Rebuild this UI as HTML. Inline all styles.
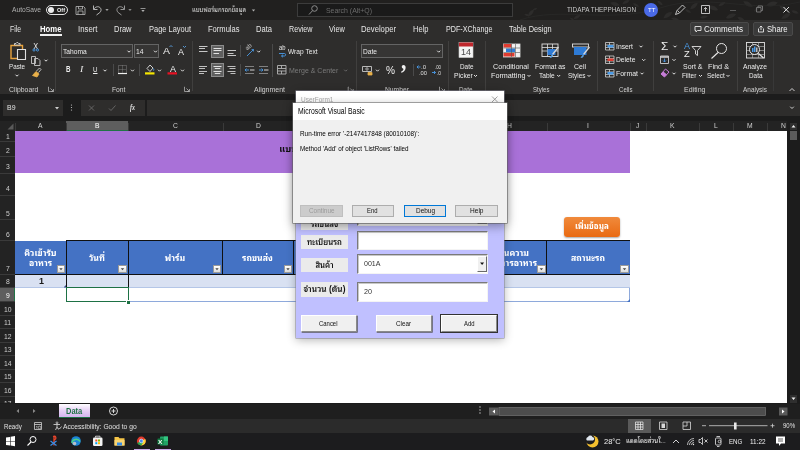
<!DOCTYPE html>
<html lang="th">
<head>
<meta charset="utf-8">
<title>Excel</title>
<style>
*{box-sizing:border-box;margin:0;padding:0}
html,body{width:800px;height:450px;overflow:hidden;background:#1c1c1c}
body{position:relative;font-family:"Liberation Sans","Noto Sans Thai Looped","Loma","Noto Sans Thai",sans-serif;font-size:8px;color:#e4e4e4;line-height:1}
.a{position:absolute}
.t{position:absolute;white-space:nowrap;line-height:10px;height:10px}
svg{overflow:visible}
</style>
</head>
<body>
<div id="root" style="position:absolute;left:0;top:0;width:800px;height:450px;overflow:hidden;will-change:transform;">
<div class="a" style="left:0px;top:0px;width:800px;height:20px;background:#21201f;"></div>
<div class="t" style="left:12.0px;top:5.0px;font-size:7.70px;color:#b0b0b0;transform-origin:0 50%;transform:scaleX(0.869);">AutoSave</div>
<div class="a" style="left:46px;top:5px;width:22px;height:10px;border:1px solid #e4e4e4;border-radius:5px;"></div>
<div class="a" style="left:48px;top:7px;width:6px;height:6px;background:#ececec;border-radius:3px;"></div>
<div class="t" style="left:57.0px;top:5.0px;font-size:6.20px;color:#f0f0f0;transform-origin:0 50%;transform:scaleX(0.894);font-weight:bold;">Off</div>
<svg class="a" style="left:0px;top:0px" width="800" height="20" viewBox="0 0 800 20" fill="none" stroke="#d0d0d0" stroke-width="1"><path transform="translate(531 13) rotate(-50)" d="M-4.5 0Q0 -3.42 4.5 0Q0 3.42 -4.5 0z" fill="#2d2c2b" stroke="none"/><path transform="translate(527 15) rotate(20)" d="M-3.0 0Q0 -2.2800000000000002 3.0 0Q0 2.2800000000000002 -3.0 0z" fill="#2d2c2b" stroke="none"/><path transform="translate(535 9) rotate(-20)" d="M-2.5 0Q0 -1.9 2.5 0Q0 1.9 -2.5 0z" fill="#2d2c2b" stroke="none"/><path transform="translate(577 17) rotate(-30)" d="M-4.0 0Q0 -3.04 4.0 0Q0 3.04 -4.0 0z" fill="#2d2c2b" stroke="none"/><path transform="translate(572 19) rotate(30)" d="M-2.5 0Q0 -1.9 2.5 0Q0 1.9 -2.5 0z" fill="#2d2c2b" stroke="none"/><path transform="translate(615 4) rotate(15)" d="M-5.0 0Q0 -3.8 5.0 0Q0 3.8 -5.0 0z" fill="#2d2c2b" stroke="none"/><path transform="translate(626 2) rotate(-25)" d="M-4.0 0Q0 -3.04 4.0 0Q0 3.04 -4.0 0z" fill="#2d2c2b" stroke="none"/><path transform="translate(636 5) rotate(30)" d="M-3.5 0Q0 -2.66 3.5 0Q0 2.66 -3.5 0z" fill="#2d2c2b" stroke="none"/><path transform="translate(668 15) rotate(-35)" d="M-5.5 0Q0 -4.18 5.5 0Q0 4.18 -5.5 0z" fill="#2d2c2b" stroke="none"/><path transform="translate(675 19) rotate(10)" d="M-4.0 0Q0 -3.04 4.0 0Q0 3.04 -4.0 0z" fill="#2d2c2b" stroke="none"/><path transform="translate(694 6) rotate(-40)" d="M-5.0 0Q0 -3.8 5.0 0Q0 3.8 -5.0 0z" fill="#2d2c2b" stroke="none"/><path transform="translate(688 11) rotate(30)" d="M-3.5 0Q0 -2.66 3.5 0Q0 2.66 -3.5 0z" fill="#2d2c2b" stroke="none"/><path transform="translate(713 8) rotate(20)" d="M-5.5 0Q0 -4.18 5.5 0Q0 4.18 -5.5 0z" fill="#2d2c2b" stroke="none"/><path transform="translate(722 4) rotate(-30)" d="M-4.0 0Q0 -3.04 4.0 0Q0 3.04 -4.0 0z" fill="#2d2c2b" stroke="none"/><path transform="translate(731 16) rotate(-20)" d="M-5.5 0Q0 -4.18 5.5 0Q0 4.18 -5.5 0z" fill="#2d2c2b" stroke="none"/><path transform="translate(741 19) rotate(25)" d="M-4.0 0Q0 -3.04 4.0 0Q0 3.04 -4.0 0z" fill="#2d2c2b" stroke="none"/><path transform="translate(748 4) rotate(30)" d="M-5.5 0Q0 -4.18 5.5 0Q0 4.18 -5.5 0z" fill="#2d2c2b" stroke="none"/><path transform="translate(757 9) rotate(-40)" d="M-4.0 0Q0 -3.04 4.0 0Q0 3.04 -4.0 0z" fill="#2d2c2b" stroke="none"/><path transform="translate(772 4) rotate(-15)" d="M-6.0 0Q0 -4.5600000000000005 6.0 0Q0 4.5600000000000005 -6.0 0z" fill="#2d2c2b" stroke="none"/><path transform="translate(783 8) rotate(35)" d="M-4.5 0Q0 -3.42 4.5 0Q0 3.42 -4.5 0z" fill="#2d2c2b" stroke="none"/><path transform="translate(786 16) rotate(-30)" d="M-5.5 0Q0 -4.18 5.5 0Q0 4.18 -5.5 0z" fill="#2d2c2b" stroke="none"/><path transform="translate(795 12) rotate(20)" d="M-4.0 0Q0 -3.04 4.0 0Q0 3.04 -4.0 0z" fill="#2d2c2b" stroke="none"/><path transform="translate(660 3) rotate(40)" d="M-3.5 0Q0 -2.66 3.5 0Q0 2.66 -3.5 0z" fill="#2d2c2b" stroke="none"/><path transform="translate(704 17) rotate(-10)" d="M-4.0 0Q0 -3.04 4.0 0Q0 3.04 -4.0 0z" fill="#2d2c2b" stroke="none"/><path d="M520 20c40-14 90 4 140-12s90 6 140-6" stroke="#2a2928" stroke-width="0.800" fill="none"/></svg>
<div class="a" style="left:297px;top:3px;width:216px;height:14px;background:#1a1a1a;border:1px solid #3c3c3c;"></div>
<svg class="a" style="left:0px;top:0px" width="800" height="20" viewBox="0 0 800 20" fill="none" stroke="#d0d0d0" stroke-width="1"><path d="M76 6.500h7.500l1.500 1.500v6.500h-9z M78.500 6.500v2.500h4v-2.500 M78 14.500v-3.500h5v3.500" stroke="#b8b8b8" stroke-width="0.800"/><path d="M93.500 5.500v4h4 M93.800 9.200c1.500-2.400 4.200-3.200 6-1.800 2 1.600 1.500 4.200-0.800 5.800l-2.500 1.800" stroke="#c4c4c4" stroke-width="0.900"/><path d="M105.3 9.0h3.400l-1.700 2z" fill="#a0a0a0" stroke="none"/><path d="M124.500 5.500v4h-4 M124.200 9.200c-1.500-2.400-4.200-3.200-6-1.800-2 1.600-1.500 4.200 0.800 5.800l2.500 1.800" stroke="#a4a4a4" stroke-width="0.900"/><path d="M128.3 9.0h3.400l-1.700 2z" fill="#8a8a8a" stroke="none"/><path d="M140.500 8.500h5" stroke="#b0b0b0" stroke-width="0.800"/><path d="M141.3 10.0h3.400l-1.700 2z" fill="#b0b0b0" stroke="none"/><path d="M251.8 9.5h3.400l-1.700 2z" fill="#b0b0b0" stroke="none"/><circle cx="314.500" cy="8.500" r="2.800" stroke="#8c8c8c"/><path d="M312.500 10.700l-3.500 3.800" stroke="#8c8c8c"/><path d="M675.500 14.500l1.500-4 5.500-5.500 2.500 2.500-5.500 5.500z M677.500 10.500l2 2" stroke="#d0d0d0" stroke-width="0.9"/><path d="M701.500 5.500h8v8h-8z M705.500 11.500v-4 M703.800 9.200l1.700-1.700 1.700 1.700" stroke="#d0d0d0" stroke-width="0.9"/><path d="M730 10.500h6" stroke="#5a5a5a"/><path d="M756.500 7.500h4.500v4.500h-4.500z M758 7.500v-1.500h4.500v4.500h-1.500" stroke="#7a7a7a" stroke-width="0.9"/><path d="M783.500 7l5.500 5.500 M789 7l-5.500 5.500" stroke="#e4e4e4"/></svg>
<div class="t th" style="left:192.0px;top:3.0px;width:56.0px;height:14px;line-height:14px;overflow:hidden;font-size:6.05px;color:#d8d8d8;text-align:left;"><span>แบบฟอร์มกรอกข้อมูล</span></div>
<div class="t" style="left:326.0px;top:5.5px;font-size:7.70px;color:#6c6c6c;transform-origin:0 50%;transform:scaleX(0.900);">Search (Alt+Q)</div>
<div class="t" style="left:567.0px;top:5.0px;font-size:7.70px;color:#c8c8c8;transform-origin:0 50%;transform:scaleX(0.822);">TIDAPA THEPPHAISON</div>
<div class="a" style="left:644px;top:3px;width:14px;height:14px;background:#4a6ae8;border-radius:7px;"></div>
<div class="t" style="left:647.5px;top:5.0px;font-size:6.00px;color:#fff;transform-origin:0 50%;transform:scaleX(1.023);">TT</div>
<div class="a" style="left:0px;top:20px;width:800px;height:74px;background:#2e2d2c;"></div>
<div class="t" style="left:10.0px;top:23.8px;font-size:8.30px;color:#e6e6e6;transform-origin:0 50%;transform:scaleX(0.822);">File</div>
<div class="t" style="left:77.5px;top:23.8px;font-size:8.30px;color:#e6e6e6;transform-origin:0 50%;transform:scaleX(0.939);">Insert</div>
<div class="t" style="left:113.5px;top:23.8px;font-size:8.30px;color:#e6e6e6;transform-origin:0 50%;transform:scaleX(0.904);">Draw</div>
<div class="t" style="left:148.5px;top:23.8px;font-size:8.30px;color:#e6e6e6;transform-origin:0 50%;transform:scaleX(0.901);">Page Layout</div>
<div class="t" style="left:207.5px;top:23.8px;font-size:8.30px;color:#e6e6e6;transform-origin:0 50%;transform:scaleX(0.911);">Formulas</div>
<div class="t" style="left:255.5px;top:23.8px;font-size:8.30px;color:#e6e6e6;transform-origin:0 50%;transform:scaleX(0.913);">Data</div>
<div class="t" style="left:288.5px;top:23.8px;font-size:8.30px;color:#e6e6e6;transform-origin:0 50%;transform:scaleX(0.864);">Review</div>
<div class="t" style="left:328.5px;top:23.8px;font-size:8.30px;color:#e6e6e6;transform-origin:0 50%;transform:scaleX(0.889);">View</div>
<div class="t" style="left:360.5px;top:23.8px;font-size:8.30px;color:#e6e6e6;transform-origin:0 50%;transform:scaleX(0.925);">Developer</div>
<div class="t" style="left:412.5px;top:23.8px;font-size:8.30px;color:#e6e6e6;transform-origin:0 50%;transform:scaleX(0.908);">Help</div>
<div class="t" style="left:445.5px;top:23.8px;font-size:8.30px;color:#e6e6e6;transform-origin:0 50%;transform:scaleX(0.862);">PDF-XChange</div>
<div class="t" style="left:509.0px;top:23.8px;font-size:8.30px;color:#e6e6e6;transform-origin:0 50%;transform:scaleX(0.889);">Table Design</div>
<div class="t" style="left:40.0px;top:23.8px;font-size:8.30px;color:#ffffff;transform-origin:0 50%;transform:scaleX(0.932);font-weight:bold;">Home</div>
<div class="a" style="left:40px;top:34px;width:22px;height:2px;background:#f0f0f0;"></div>
<div class="a" style="left:690px;top:22px;width:59px;height:14px;background:#3a3a3a;border:1px solid #4a4a4a;border-radius:2px;"></div>
<div class="a" style="left:753px;top:22px;width:40px;height:14px;background:#3a3a3a;border:1px solid #4a4a4a;border-radius:2px;"></div>
<div class="t" style="left:703.5px;top:24.0px;font-size:8.30px;color:#f4f4f4;transform-origin:0 50%;transform:scaleX(0.972);">Comments</div>
<div class="t" style="left:767.0px;top:24.0px;font-size:8.30px;color:#f4f4f4;transform-origin:0 50%;transform:scaleX(0.926);">Share</div>
<div class="a" style="left:55px;top:41px;width:1px;height:50px;background:#403f3e;"></div>
<div class="a" style="left:192px;top:41px;width:1px;height:50px;background:#403f3e;"></div>
<div class="a" style="left:355.5px;top:41px;width:1.0px;height:50px;background:#403f3e;"></div>
<div class="a" style="left:447.5px;top:41px;width:1.0px;height:50px;background:#403f3e;"></div>
<div class="a" style="left:484.5px;top:41px;width:1.0px;height:50px;background:#403f3e;"></div>
<div class="a" style="left:597px;top:41px;width:1px;height:50px;background:#403f3e;"></div>
<div class="a" style="left:653px;top:41px;width:1px;height:50px;background:#403f3e;"></div>
<div class="a" style="left:737px;top:41px;width:1px;height:50px;background:#403f3e;"></div>
<div class="a" style="left:773px;top:41px;width:1px;height:50px;background:#383838;"></div>
<div class="t" style="left:8.7px;top:84.6px;font-size:7.60px;color:#d2d2d2;transform-origin:0 50%;transform:scaleX(0.901);">Clipboard</div>
<div class="t" style="left:112.0px;top:84.6px;font-size:7.60px;color:#d2d2d2;transform-origin:0 50%;transform:scaleX(0.888);">Font</div>
<div class="t" style="left:253.5px;top:84.6px;font-size:7.60px;color:#d2d2d2;transform-origin:0 50%;transform:scaleX(0.917);">Alignment</div>
<div class="t" style="left:385.0px;top:84.6px;font-size:7.60px;color:#d2d2d2;transform-origin:0 50%;transform:scaleX(0.888);">Number</div>
<div class="t" style="left:459.0px;top:84.6px;font-size:7.60px;color:#d2d2d2;transform-origin:0 50%;transform:scaleX(0.841);">Date</div>
<div class="t" style="left:533.0px;top:84.6px;font-size:7.60px;color:#d2d2d2;transform-origin:0 50%;transform:scaleX(0.797);">Styles</div>
<div class="t" style="left:619.0px;top:84.6px;font-size:7.60px;color:#d2d2d2;transform-origin:0 50%;transform:scaleX(0.799);">Cells</div>
<div class="t" style="left:684.0px;top:84.6px;font-size:7.60px;color:#d2d2d2;transform-origin:0 50%;transform:scaleX(0.925);">Editing</div>
<div class="t" style="left:743.0px;top:84.6px;font-size:7.60px;color:#d2d2d2;transform-origin:0 50%;transform:scaleX(0.848);">Analysis</div>
<div class="a" style="left:61px;top:44px;width:72px;height:14px;background:#363534;border:1px solid #646464;"></div>
<div class="a" style="left:134px;top:44px;width:25px;height:14px;background:#363534;border:1px solid #646464;"></div>
<div class="a" style="left:361px;top:44px;width:82px;height:14px;background:#363534;border:1px solid #646464;"></div>
<div class="t" style="left:63.0px;top:46.6px;font-size:8.00px;color:#ececec;transform-origin:0 50%;transform:scaleX(0.835);">Tahoma</div>
<div class="t" style="left:136.0px;top:46.6px;font-size:8.00px;color:#ececec;transform-origin:0 50%;transform:scaleX(0.843);">14</div>
<div class="t" style="left:363.0px;top:46.6px;font-size:8.00px;color:#ececec;transform-origin:0 50%;transform:scaleX(0.828);">Date</div>
<div class="a" style="left:211px;top:44.5px;width:13px;height:13.5px;background:#5f5f5f;border:0.600px solid #8c8c8c;"></div>
<div class="a" style="left:211px;top:63px;width:13px;height:14px;background:#5f5f5f;border:0.600px solid #8c8c8c;"></div>
<div class="t" style="left:9.0px;top:61.6px;font-size:7.90px;color:#ececec;transform-origin:0 50%;transform:scaleX(0.792);">Paste</div>
<div class="t" style="left:288.0px;top:46.6px;font-size:8.00px;color:#ececec;transform-origin:0 50%;transform:scaleX(0.827);">Wrap Text</div>
<div class="t" style="left:288.7px;top:65.6px;font-size:8.00px;color:#7a7a7a;transform-origin:0 50%;transform:scaleX(0.873);">Merge &amp; Center</div>
<div class="t" style="left:459.5px;top:61.6px;font-size:7.90px;color:#ececec;transform-origin:0 50%;transform:scaleX(0.809);">Date</div>
<div class="t" style="left:453.7px;top:70.6px;font-size:7.90px;color:#ececec;transform-origin:0 50%;transform:scaleX(0.857);">Picker</div>
<div class="t" style="left:493.0px;top:61.6px;font-size:7.90px;color:#ececec;transform-origin:0 50%;transform:scaleX(0.911);">Conditional</div>
<div class="t" style="left:490.5px;top:70.6px;font-size:7.90px;color:#ececec;transform-origin:0 50%;transform:scaleX(0.914);">Formatting</div>
<div class="t" style="left:534.5px;top:61.6px;font-size:7.90px;color:#ececec;transform-origin:0 50%;transform:scaleX(0.858);">Format as</div>
<div class="t" style="left:539.0px;top:70.6px;font-size:7.90px;color:#ececec;transform-origin:0 50%;transform:scaleX(0.835);">Table</div>
<div class="t" style="left:574.0px;top:61.6px;font-size:7.90px;color:#ececec;transform-origin:0 50%;transform:scaleX(0.882);">Cell</div>
<div class="t" style="left:568.0px;top:70.6px;font-size:7.90px;color:#ececec;transform-origin:0 50%;transform:scaleX(0.813);">Styles</div>
<div class="t" style="left:616.0px;top:41.6px;font-size:7.90px;color:#ececec;transform-origin:0 50%;transform:scaleX(0.860);">Insert</div>
<div class="t" style="left:616.0px;top:55.1px;font-size:7.90px;color:#ececec;transform-origin:0 50%;transform:scaleX(0.854);">Delete</div>
<div class="t" style="left:616.0px;top:68.6px;font-size:7.90px;color:#ececec;transform-origin:0 50%;transform:scaleX(0.879);">Format</div>
<div class="t" style="left:683.0px;top:61.6px;font-size:7.90px;color:#ececec;transform-origin:0 50%;transform:scaleX(0.888);">Sort &amp;</div>
<div class="t" style="left:681.7px;top:70.6px;font-size:7.90px;color:#ececec;transform-origin:0 50%;transform:scaleX(0.815);">Filter</div>
<div class="t" style="left:708.0px;top:61.6px;font-size:7.90px;color:#ececec;transform-origin:0 50%;transform:scaleX(0.920);">Find &amp;</div>
<div class="t" style="left:706.7px;top:70.6px;font-size:7.90px;color:#ececec;transform-origin:0 50%;transform:scaleX(0.811);">Select</div>
<div class="t" style="left:743.0px;top:61.6px;font-size:7.90px;color:#ececec;transform-origin:0 50%;transform:scaleX(0.854);">Analyze</div>
<div class="t" style="left:749.0px;top:70.6px;font-size:7.90px;color:#ececec;transform-origin:0 50%;transform:scaleX(0.809);">Data</div>
<div class="t" style="left:65.5px;top:64.8px;font-size:8.20px;color:#f0f0f0;transform-origin:0 50%;transform:scaleX(0.760);font-weight:bold;">B</div>
<div class="t" style="left:79.5px;top:64.8px;font-size:8.20px;color:#f0f0f0;transform-origin:0 50%;transform:scaleX(1.200);font-style:italic;font-family:'Liberation Serif',serif;">I</div>
<div class="t" style="left:93.0px;top:64.5px;font-size:8.00px;color:#f0f0f0;transform-origin:0 50%;transform:scaleX(0.779);text-decoration:underline;">U</div>
<div class="t" style="left:162.5px;top:46.0px;font-size:9.50px;color:#f0f0f0;transform-origin:0 50%;transform:scaleX(1.105);">A</div>
<div class="t" style="left:177.5px;top:46.5px;font-size:8.50px;color:#f0f0f0;transform-origin:0 50%;transform:scaleX(1.058);">A</div>
<div class="t" style="left:385.5px;top:65.0px;font-size:10.50px;color:#f0f0f0;transform-origin:0 50%;transform:scaleX(0.964);">%</div>
<div class="t" style="left:401.0px;top:55.5px;font-size:26.00px;color:#f0f0f0;transform-origin:0 50%;transform:scaleX(0.831);font-weight:bold;font-family:'Liberation Serif',serif;">,</div>
<div class="t" style="left:170.0px;top:63.8px;font-size:8.50px;color:#f0f0f0;transform-origin:0 50%;transform:scaleX(1.058);">A</div>
<div class="t" style="left:660.7px;top:41.0px;font-size:10.50px;color:#f0f0f0;transform-origin:0 50%;transform:scaleX(1.125);">Σ</div>
<div class="t" style="left:245.5px;top:43.5px;font-size:6.00px;color:#c8c8c8;transform-origin:0 50%;transform:scaleX(0.824);transform:rotate(-42deg);">ab</div>
<div class="t" style="left:278.5px;top:43.3px;font-size:6.30px;color:#e8e8e8;transform-origin:0 50%;transform:scaleX(0.928);">ab</div>
<div class="t" style="left:421.0px;top:62.0px;font-size:5.00px;color:#e0e0e0;transform-origin:0 50%;transform:scaleX(1.200);">.0</div>
<div class="t" style="left:419.0px;top:67.5px;font-size:5.00px;color:#e0e0e0;transform-origin:0 50%;transform:scaleX(1.151);">.00</div>
<div class="t" style="left:435.0px;top:62.0px;font-size:5.00px;color:#e0e0e0;transform-origin:0 50%;transform:scaleX(0.863);">.00</div>
<div class="t" style="left:437.0px;top:67.5px;font-size:5.00px;color:#e0e0e0;transform-origin:0 50%;transform:scaleX(0.959);">.0</div>
<div class="t" style="left:684.0px;top:41.3px;font-size:9.30px;color:#4a9be8;transform-origin:0 50%;transform:scaleX(0.967);">A</div>
<div class="t" style="left:684.3px;top:49.3px;font-size:9.30px;color:#f0f0f0;transform-origin:0 50%;transform:scaleX(1.003);">Z</div>
<svg class="a" style="left:0px;top:20px" width="800" height="74" viewBox="0 20 800 74" fill="none" stroke="#d0d0d0" stroke-width="1"><path d="M49 87h-0.5v4.500h4.500v-0.500 M53.5 91.5v-2.500 M53.5 91.5h-2.500 M53.5 91.5l-3-3" stroke="#b0b0b0" stroke-width="0.8"/><path d="M185 87h-0.5v4.500h4.500v-0.500 M189.5 91.5v-2.500 M189.5 91.5h-2.500 M189.5 91.5l-3-3" stroke="#b0b0b0" stroke-width="0.8"/><path d="M348.7 87h-0.5v4.500h4.500v-0.500 M353.2 91.5v-2.500 M353.2 91.5h-2.500 M353.2 91.5l-3-3" stroke="#b0b0b0" stroke-width="0.8"/><path d="M440 87h-0.5v4.500h4.500v-0.500 M444.5 91.5v-2.500 M444.5 91.5h-2.500 M444.5 91.5l-3-3" stroke="#b0b0b0" stroke-width="0.8"/><path d="M15.5 74.7l1.5 1.5 1.5 -1.5" stroke="#e4e4e4" stroke-width="1"/><path d="M44.5 59.7l1.5 1.5 1.5 -1.5" stroke="#e4e4e4" stroke-width="1"/><path d="M127.5 50.7l1.5 1.5 1.5 -1.5" stroke="#e4e4e4" stroke-width="1"/><path d="M154.0 50.7l1.5 1.5 1.5 -1.5" stroke="#e4e4e4" stroke-width="1"/><path d="M103.5 69.7l1.5 1.5 1.5 -1.5" stroke="#e4e4e4" stroke-width="1"/><path d="M131.0 69.7l1.5 1.5 1.5 -1.5" stroke="#e4e4e4" stroke-width="1"/><path d="M158.0 69.7l1.5 1.5 1.5 -1.5" stroke="#e4e4e4" stroke-width="1"/><path d="M181.0 69.7l1.5 1.5 1.5 -1.5" stroke="#e4e4e4" stroke-width="1"/><path d="M257.2 50.7l1.5 1.5 1.5 -1.5" stroke="#e4e4e4" stroke-width="1"/><path d="M376.0 69.7l1.5 1.5 1.5 -1.5" stroke="#e4e4e4" stroke-width="1"/><path d="M437.2 50.7l1.5 1.5 1.5 -1.5" stroke="#e4e4e4" stroke-width="1"/><path d="M474.0 75.0l1.5 1.5 1.5 -1.5" stroke="#e4e4e4" stroke-width="1"/><path d="M527.5 75.0l1.5 1.5 1.5 -1.5" stroke="#e4e4e4" stroke-width="1"/><path d="M557.2 75.0l1.5 1.5 1.5 -1.5" stroke="#e4e4e4" stroke-width="1"/><path d="M587.5 75.0l1.5 1.5 1.5 -1.5" stroke="#e4e4e4" stroke-width="1"/><path d="M639.5 45.7l1.5 1.5 1.5 -1.5" stroke="#e4e4e4" stroke-width="1"/><path d="M642.2 59.2l1.5 1.5 1.5 -1.5" stroke="#e4e4e4" stroke-width="1"/><path d="M640.5 72.7l1.5 1.5 1.5 -1.5" stroke="#e4e4e4" stroke-width="1"/><path d="M673.5 45.7l1.5 1.5 1.5 -1.5" stroke="#e4e4e4" stroke-width="1"/><path d="M672.5 59.2l1.5 1.5 1.5 -1.5" stroke="#e4e4e4" stroke-width="1"/><path d="M672.5 72.7l1.5 1.5 1.5 -1.5" stroke="#e4e4e4" stroke-width="1"/><path d="M699.0 75.0l1.5 1.5 1.5 -1.5" stroke="#e4e4e4" stroke-width="1"/><path d="M726.5 75.0l1.5 1.5 1.5 -1.5" stroke="#e4e4e4" stroke-width="1"/><path d="M344.2 69.7l1.5 1.5 1.5 -1.5" stroke="#6a6a6a" stroke-width="1"/><path d="M789.500 91l2.500-2.500 2.500 2.500" stroke="#d0d0d0"/><path d="M169.500 47l1.500-1.500 1.500 1.500" stroke="#5aa0e0" stroke-width="0.9"/><path d="M183 46l1.500 1.500 1.500-1.500" stroke="#5aa0e0" stroke-width="0.9"/><path d="M11 45.500h11.500v13h-11.500z" stroke="#e8a33d" stroke-width="1.400"/><path d="M14.500 45v-1.500h1.500l0.800-1h1l0.800 1h1.500v1.500z" stroke="#d8d8d8" stroke-width="0.9" fill="#2e2d2c"/><path d="M17.500 49.500h8v10h-8z" fill="#2e2d2c" stroke="#e0e0e0" stroke-width="1.100"/><path d="M34 43l3.500 6 M37.500 43l-3.500 6" stroke="#e0e0e0" stroke-width="0.9"/><circle cx="34" cy="50" r="1.100" stroke="#4a9be8" stroke-width="0.9"/><circle cx="37.500" cy="50" r="1.100" stroke="#4a9be8" stroke-width="0.9"/><path d="M31.500 56.500h4v7h-4z M34.500 58.500h3.500l2 2v5h-5.500z" stroke="#c8c8c8" stroke-width="0.9"/><path d="M32.500 75.500l3.500-4 3 2.500-2 3z" fill="#e8b04a" stroke="#e8b04a" stroke-width="0.8"/><path d="M36.500 71l3-3 1.500 1.500-2.500 3" stroke="#d0d0d0" stroke-width="0.9"/><path d="M113.500 64v12 M139.500 64v12 M413.500 64v12 M240.500 45v12 M240.500 64v12 M272.500 44v33" stroke="#4a4a4a"/><path d="M118.500 65.500h8v8h-8z" stroke="#8a8a8a" stroke-width="0.9" stroke-dasharray="1 1"/><path d="M118 73.500h9" stroke="#f0f0f0" stroke-width="1.200"/><path d="M122.500 65.500v8 M118.500 69.500h8" stroke="#8a8a8a" stroke-width="0.8" stroke-dasharray="1 1"/><path d="M147 68.500l3-3.500 3 3-3 3.500z" stroke="#e0e0e0" stroke-width="0.9"/><path d="M153.300 68.500c0.700 1 0.700 1.800 0 2.200" stroke="#4a9be8"/><rect x="145" y="72.300" width="9.500" height="2.200" fill="#f5e500" stroke="none"/><rect x="167.500" y="72.300" width="9.500" height="2.200" fill="#e81123" stroke="none"/><path d="M199 46.5h8.5" stroke="#d8d8d8" stroke-width="0.9"/><path d="M199 48.5h6" stroke="#d8d8d8" stroke-width="0.9"/><path d="M199 51.5h8.5" stroke="#d8d8d8" stroke-width="0.9"/><path d="M213.5 48.5h8" stroke="#f0f0f0" stroke-width="0.9"/><path d="M213.5 50.5h8" stroke="#f0f0f0" stroke-width="0.9"/><path d="M213.5 53.5h5.5" stroke="#f0f0f0" stroke-width="0.9"/><path d="M227.5 50.5h8.5" stroke="#d8d8d8" stroke-width="0.9"/><path d="M227.5 53.5h6" stroke="#d8d8d8" stroke-width="0.9"/><path d="M227.5 55.5h8.5" stroke="#d8d8d8" stroke-width="0.9"/><path d="M199 66.5h8" stroke="#d0d0d0" stroke-width="0.9"/><path d="M199 68.5h6" stroke="#d0d0d0" stroke-width="0.9"/><path d="M199 71.5h8" stroke="#d0d0d0" stroke-width="0.9"/><path d="M199 73.5h5" stroke="#d0d0d0" stroke-width="0.9"/><path d="M213.5 66.5h8" stroke="#f0f0f0" stroke-width="0.9"/><path d="M214.75 68.5h5.5" stroke="#f0f0f0" stroke-width="0.9"/><path d="M213.5 71.5h8" stroke="#f0f0f0" stroke-width="0.9"/><path d="M214.75 73.5h5.5" stroke="#f0f0f0" stroke-width="0.9"/><path d="M227.5 66.5h8" stroke="#d0d0d0" stroke-width="0.9"/><path d="M229.5 68.5h6" stroke="#d0d0d0" stroke-width="0.9"/><path d="M227.5 71.5h8" stroke="#d0d0d0" stroke-width="0.9"/><path d="M230.5 73.5h5" stroke="#d0d0d0" stroke-width="0.9"/><path d="M247 56l6.500-6.500" stroke="#4a9be8" stroke-width="0.900"/><path d="M251.500 49.500h2v2" stroke="#4a9be8" stroke-width="0.800"/><path d="M245 66.5h9" stroke="#8a8a8a" stroke-width="0.9"/><path d="M245 73.5h9" stroke="#8a8a8a" stroke-width="0.9"/><path d="M250 70h4.5" stroke="#e8e8e8" stroke-width="0.9"/><path d="M249 70h-4 M246.500 68.500l-1.500 1.500 1.500 1.500" stroke="#4a9be8" stroke-width="0.9"/><path d="M259 66.5h9" stroke="#8a8a8a" stroke-width="0.9"/><path d="M259 73.5h9" stroke="#8a8a8a" stroke-width="0.9"/><path d="M264 70h4.5" stroke="#e8e8e8" stroke-width="0.9"/><path d="M259 70h4 M261.500 68.500l1.500 1.500 -1.500 1.500" stroke="#4a9be8" stroke-width="0.9"/><path d="M279 53.500h5.500c1.500 0 1.500 2.500 0 2.500h-3 M283 54.700l-1.500 1.300 1.500 1.300" stroke="#4a9be8" stroke-width="0.9"/><path d="M277.500 65.500h8.500v8.500h-8.500z M277.500 68.500h8.500 M277.500 71h8.500 M281.500 65.500v3 M281.500 71v3" stroke="#b4b4b4" stroke-width="0.9"/><path d="M362.500 66.500h9v5h-9z" stroke="#c8c8c8" stroke-width="0.9"/><circle cx="367" cy="69" r="1.200" stroke="#c8c8c8" stroke-width="0.8"/><path d="M368 72.500h4v2.500h-4z" fill="#e8b04a" stroke="#e8b04a" stroke-width="0.8"/><path d="M417 67h3.500 M418.500 65.500l-1.500 1.500 1.500 1.500" stroke="#4a9be8" stroke-width="0.9"/><path d="M432 72.500h3.500 M434 71l1.500 1.500 -1.500 1.500" stroke="#4a9be8" stroke-width="0.9"/><rect x="459" y="42.500" width="14" height="15" fill="#f4f4f4" stroke="#d0d0d0" stroke-width="0.600"/><rect x="459" y="42.500" width="14" height="4" fill="#c0272d" stroke="none"/><rect x="503.500" y="44" width="16.500" height="13" fill="#f0f0f0" stroke="#e0e0e0" stroke-width="0.800"/><rect x="503.500" y="44" width="8" height="3.500" fill="#e03c31" stroke="none"/><rect x="506" y="48.500" width="9" height="3.500" fill="#2e7bd6" stroke="none"/><rect x="503.500" y="53" width="11" height="3.500" fill="#e03c31" stroke="none"/><path d="M503.500 48h16.500 M503.500 52.500h16.500 M511.500 44v13 M515.500 44v13" stroke="#555" stroke-width="0.600"/><rect x="542" y="44" width="16" height="12.500" fill="none" stroke="#e0e0e0" stroke-width="0.900"/><path d="M542 47.500h16 M542 51h16 M547.500 44v12.500 M552.500 44v12.500" stroke="#e0e0e0" stroke-width="0.800"/><rect x="547.500" y="49" width="8" height="6" fill="#2e7bd6" stroke="none"/><path d="M558.500 47l-6 7.500" stroke="#d8d8d8" stroke-width="1.300"/><path d="M552.500 54.500l-2.500 3 2 -0.500z" fill="#5aa0e0" stroke="#5aa0e0" stroke-width="0.800"/><rect x="572.500" y="44" width="16" height="3" fill="none" stroke="#e0e0e0" stroke-width="0.900"/><rect x="574" y="47" width="12.500" height="8" fill="#2e7bd6" stroke="none"/><path d="M589.500 47l-6 7.500" stroke="#d8d8d8" stroke-width="1.300"/><path d="M583.500 54.500l-2.500 3 2 -0.500z" fill="#5aa0e0" stroke="#5aa0e0" stroke-width="0.800"/><path d="M605.500 42.5h8.500v7.500h-8.500z M605.500 45h8.500 M605.500 47.5h8.500 M609.500 42.5v7.500" stroke="#d0d0d0" stroke-width="0.800"/><rect x="607.500" y="45" width="6" height="2.500" fill="#4a9be8" stroke="none"/><path d="M605.500 56.0h8.500v7.500h-8.500z M605.500 58.5h8.500 M605.500 61.0h8.500 M609.500 56.0v7.500" stroke="#d0d0d0" stroke-width="0.800"/><rect x="607.500" y="58.5" width="6" height="2.500" fill="#e03c31" stroke="none"/><path d="M605.500 69.5h8.500v7.500h-8.500z M605.500 72h8.500 M605.500 74.5h8.500 M609.500 69.5v7.500" stroke="#d0d0d0" stroke-width="0.800"/><rect x="607.500" y="72" width="6" height="2.500" fill="#4a9be8" stroke="none"/><path d="M660.500 56h8v7.500h-8z" stroke="#d0d0d0" stroke-width="0.900"/><path d="M660.500 57h8" stroke="#d0d0d0" stroke-width="1.500"/><path d="M664.500 58.500v3.500 M663 60.500l1.500 1.500 1.500-1.500" stroke="#4a9be8" stroke-width="0.900"/><path d="M661 74l4.500-5 3.500 3-4.500 5z" stroke="#c77dd8" stroke-width="1"/><path d="M661 74l2.200-2.500 3.500 3-2.200 2.500z" fill="#c77dd8" stroke="none"/><path d="M663 72l3.500 3" stroke="#c77dd8" stroke-width="0.900"/><path d="M692 46.500h9l-3.500 4v5l-2 -1.500v-3.500z" stroke="#e0e0e0" stroke-width="0.900"/><circle cx="721.500" cy="48.500" r="5" stroke="#e8e8e8" stroke-width="1"/><path d="M718 52.500l-6.500 6" stroke="#e8e8e8" stroke-width="1.100"/><rect x="746.500" y="42.500" width="18" height="15.500" stroke="#e0e0e0" stroke-width="0.900"/><path d="M746.500 46.500h18 M746.500 50.500h18 M746.500 54.500h18 M752.500 42.500v15.500 M758.500 42.500v15.500" stroke="#bdbdbd" stroke-width="0.600"/><circle cx="754.500" cy="49.500" r="5" fill="#2e2d2c" stroke="#e8e8e8" stroke-width="1"/><rect x="752" y="48" width="1.500" height="4" fill="#4a9be8" stroke="none"/><rect x="754" y="46.500" width="1.500" height="5.500" fill="#4a9be8" stroke="none"/><rect x="756" y="47.500" width="1.500" height="4.500" fill="#bbb" stroke="none"/><path d="M758.500 53.500l5 4.500" stroke="#e8e8e8" stroke-width="1.200"/><path d="M695 26.500h6v4h-3.500l-1.500 1.500v-1.500h-1z" stroke="#e8e8e8" stroke-width="0.900"/><path d="M758.500 28.500v3.500h5v-3.500 M761 30v-4 M759.500 27.500l1.500-1.500 1.500 1.500" stroke="#e8e8e8" stroke-width="0.900"/></svg>
<div class="t" style="left:461.0px;top:47.3px;font-size:8.50px;color:#4a4a4a;transform-origin:0 50%;transform:scaleX(1.058);">14</div>
<div class="a" style="left:0px;top:94px;width:800px;height:27px;background:#1c1c1c;"></div>
<div class="a" style="left:3px;top:100px;width:60px;height:16px;background:#2e2d2c;"></div>
<div class="a" style="left:80.5px;top:100px;width:64.5px;height:16px;background:#2e2d2c;"></div>
<div class="a" style="left:146.5px;top:100px;width:653.5px;height:16px;background:#2e2d2c;"></div>
<div class="t" style="left:7.0px;top:103.0px;font-size:7.80px;color:#e4e4e4;transform-origin:0 50%;transform:scaleX(0.891);">B9</div>
<svg class="a" style="left:0px;top:94px" width="800" height="27" viewBox="0 94 800 27" fill="none" stroke="#d0d0d0" stroke-width="1"><path d="M55 107l2 2.500 2-2.500z" fill="#d0d0d0" stroke="none"/><circle cx="71.500" cy="105" r="0.600" fill="#c8c8c8" stroke="none"/><circle cx="71.500" cy="107.500" r="0.600" fill="#c8c8c8" stroke="none"/><circle cx="71.500" cy="110" r="0.600" fill="#c8c8c8" stroke="none"/><path d="M89 105.500l5 5 M94 105.500l-5 5" stroke="#6a6a6a" stroke-width="0.900"/><path d="M109 108.500l2 2 4.500-5" stroke="#6a6a6a" stroke-width="0.900"/><path d="M790.2 106.7l1.8 1.8 1.8 -1.8" stroke="#d0d0d0" stroke-width="1"/></svg>
<div class="t" style="left:130.0px;top:103.0px;font-size:8.00px;color:#e8e8e8;transform-origin:0 50%;transform:scaleX(0.750);font-weight:bold;font-style:italic;font-family:'Liberation Serif',serif;">fx</div>
<div class="a" style="left:0px;top:121px;width:800px;height:10px;background:#232323;"></div>
<div class="a" style="left:0px;top:131px;width:15px;height:272px;background:#232323;"></div>
<div class="a" style="left:15px;top:131px;width:772px;height:272px;background:#ffffff;"></div>
<div class="a" style="left:787px;top:121px;width:13px;height:282px;background:#1c1c1c;"></div>
<div class="a" style="left:790px;top:122.5px;width:7px;height:7.5px;background:#2f2f2f;"></div>
<div class="a" style="left:790px;top:130.5px;width:7px;height:9.5px;background:#5c5c5c;"></div>
<div class="a" style="left:790px;top:395px;width:7px;height:7.5px;background:#2f2f2f;"></div>
<svg class="a" style="left:787px;top:121px" width="13" height="282" viewBox="787 121 13 282" fill="none" stroke="#d0d0d0" stroke-width="1"><path d="M791.500 127.500l2-2.500 2 2.500z M791.500 397.500l2 2.500 2-2.500z" fill="#f0f0f0" stroke="none"/></svg>
<div class="a" style="left:66px;top:121px;width:62px;height:10px;background:#5e5e5e;border-bottom:1px solid #217346;"></div>
<div class="a" style="left:0px;top:287.5px;width:15px;height:14.0px;background:#5e5e5e;border-right:1px solid #217346;"></div>
<div class="t" style="left:38.2px;top:121.0px;font-size:7.50px;color:#cfcfcf;transform-origin:0 50%;transform:scaleX(0.900);">A</div>
<div class="t" style="left:94.7px;top:121.0px;font-size:7.50px;color:#ffffff;transform-origin:0 50%;transform:scaleX(0.900);">B</div>
<div class="t" style="left:172.6px;top:121.0px;font-size:7.50px;color:#cfcfcf;transform-origin:0 50%;transform:scaleX(0.900);">C</div>
<div class="t" style="left:255.6px;top:121.0px;font-size:7.50px;color:#cfcfcf;transform-origin:0 50%;transform:scaleX(0.900);">D</div>
<div class="t" style="left:507.1px;top:121.0px;font-size:7.50px;color:#cfcfcf;transform-origin:0 50%;transform:scaleX(0.900);">H</div>
<div class="t" style="left:587.1px;top:121.0px;font-size:7.50px;color:#cfcfcf;transform-origin:0 50%;transform:scaleX(0.900);">I</div>
<div class="t" style="left:636.3px;top:121.0px;font-size:7.50px;color:#cfcfcf;transform-origin:0 50%;transform:scaleX(0.900);">J</div>
<div class="t" style="left:669.7px;top:121.0px;font-size:7.50px;color:#cfcfcf;transform-origin:0 50%;transform:scaleX(0.900);">K</div>
<div class="t" style="left:714.1px;top:121.0px;font-size:7.50px;color:#cfcfcf;transform-origin:0 50%;transform:scaleX(0.900);">L</div>
<div class="t" style="left:747.2px;top:121.0px;font-size:7.50px;color:#cfcfcf;transform-origin:0 50%;transform:scaleX(0.900);">M</div>
<div class="t" style="left:780.6px;top:121.0px;font-size:7.50px;color:#cfcfcf;transform-origin:0 50%;transform:scaleX(0.900);">N</div>
<div class="a" style="left:15px;top:123px;width:1px;height:8px;background:#3a3a3a;"></div>
<div class="a" style="left:66px;top:123px;width:1px;height:8px;background:#3a3a3a;"></div>
<div class="a" style="left:128px;top:123px;width:1px;height:8px;background:#3a3a3a;"></div>
<div class="a" style="left:222.5px;top:123px;width:1.0px;height:8px;background:#3a3a3a;"></div>
<div class="a" style="left:546.5px;top:123px;width:1.0px;height:8px;background:#3a3a3a;"></div>
<div class="a" style="left:630px;top:123px;width:1px;height:8px;background:#3a3a3a;"></div>
<div class="a" style="left:646px;top:123px;width:1px;height:8px;background:#3a3a3a;"></div>
<div class="a" style="left:698.5px;top:123px;width:1.0px;height:8px;background:#3a3a3a;"></div>
<div class="a" style="left:732.5px;top:123px;width:1.0px;height:8px;background:#3a3a3a;"></div>
<div class="a" style="left:767px;top:123px;width:1px;height:8px;background:#3a3a3a;"></div>
<div class="t" style="left:5.6px;top:131.5px;font-size:8.00px;color:#cfcfcf;transform-origin:0 50%;transform:scaleX(0.850);">1</div>
<div class="t" style="left:5.6px;top:145.5px;font-size:8.00px;color:#cfcfcf;transform-origin:0 50%;transform:scaleX(0.850);">2</div>
<div class="t" style="left:5.6px;top:162.0px;font-size:8.00px;color:#cfcfcf;transform-origin:0 50%;transform:scaleX(0.850);">3</div>
<div class="t" style="left:5.6px;top:184.0px;font-size:8.00px;color:#cfcfcf;transform-origin:0 50%;transform:scaleX(0.850);">4</div>
<div class="t" style="left:5.6px;top:208.5px;font-size:8.00px;color:#cfcfcf;transform-origin:0 50%;transform:scaleX(0.850);">5</div>
<div class="t" style="left:5.6px;top:230.0px;font-size:8.00px;color:#cfcfcf;transform-origin:0 50%;transform:scaleX(0.850);">6</div>
<div class="t" style="left:5.6px;top:263.5px;font-size:8.00px;color:#cfcfcf;transform-origin:0 50%;transform:scaleX(0.850);">7</div>
<div class="t" style="left:5.6px;top:277.0px;font-size:8.00px;color:#cfcfcf;transform-origin:0 50%;transform:scaleX(0.850);">8</div>
<div class="t" style="left:5.6px;top:291.0px;font-size:8.00px;color:#ffffff;transform-origin:0 50%;transform:scaleX(0.850);">9</div>
<div class="t" style="left:3.7px;top:304.5px;font-size:8.00px;color:#cfcfcf;transform-origin:0 50%;transform:scaleX(0.850);">10</div>
<div class="t" style="left:3.7px;top:318.0px;font-size:8.00px;color:#cfcfcf;transform-origin:0 50%;transform:scaleX(0.850);">11</div>
<div class="t" style="left:3.7px;top:331.5px;font-size:8.00px;color:#cfcfcf;transform-origin:0 50%;transform:scaleX(0.850);">12</div>
<div class="t" style="left:3.7px;top:345.0px;font-size:8.00px;color:#cfcfcf;transform-origin:0 50%;transform:scaleX(0.850);">13</div>
<div class="t" style="left:3.7px;top:358.5px;font-size:8.00px;color:#cfcfcf;transform-origin:0 50%;transform:scaleX(0.850);">14</div>
<div class="t" style="left:3.7px;top:372.0px;font-size:8.00px;color:#cfcfcf;transform-origin:0 50%;transform:scaleX(0.850);">15</div>
<div class="t" style="left:3.7px;top:385.5px;font-size:8.00px;color:#cfcfcf;transform-origin:0 50%;transform:scaleX(0.850);">16</div>
<div class="a" style="left:0;top:396px;width:15px;height:7px;overflow:hidden"><div class="t" style="left:3.7px;top:3px;font-size:7.5px;color:#cfcfcf;transform-origin:0 50%;transform:scaleX(.88)">17</div></div>
<div class="a" style="left:0px;top:141.0px;width:15px;height:1.0px;background:#3a3a3a;"></div>
<div class="a" style="left:0px;top:156.0px;width:15px;height:1.0px;background:#3a3a3a;"></div>
<div class="a" style="left:0px;top:172.5px;width:15px;height:1.0px;background:#3a3a3a;"></div>
<div class="a" style="left:0px;top:194.5px;width:15px;height:1.0px;background:#3a3a3a;"></div>
<div class="a" style="left:0px;top:218.5px;width:15px;height:1.0px;background:#3a3a3a;"></div>
<div class="a" style="left:0px;top:240.0px;width:15px;height:1.0px;background:#3a3a3a;"></div>
<div class="a" style="left:0px;top:273.5px;width:15px;height:1.0px;background:#3a3a3a;"></div>
<div class="a" style="left:0px;top:287.0px;width:15px;height:1.0px;background:#3a3a3a;"></div>
<div class="a" style="left:0px;top:301.0px;width:15px;height:1.0px;background:#3a3a3a;"></div>
<div class="a" style="left:0px;top:314.5px;width:15px;height:1.0px;background:#3a3a3a;"></div>
<div class="a" style="left:0px;top:328.0px;width:15px;height:1.0px;background:#3a3a3a;"></div>
<div class="a" style="left:0px;top:341.5px;width:15px;height:1.0px;background:#3a3a3a;"></div>
<div class="a" style="left:0px;top:355.0px;width:15px;height:1.0px;background:#3a3a3a;"></div>
<div class="a" style="left:0px;top:368.5px;width:15px;height:1.0px;background:#3a3a3a;"></div>
<div class="a" style="left:0px;top:382.0px;width:15px;height:1.0px;background:#3a3a3a;"></div>
<div class="a" style="left:0px;top:395.5px;width:15px;height:1.0px;background:#3a3a3a;"></div>
<svg class="a" style="left:7px;top:123px" width="7" height="7" viewBox="0 0 7 7"><path d="M6.500 0.500v6h-6z" fill="#5a5a5a"/></svg>
<div class="a" style="left:15px;top:131px;width:615px;height:42px;background:#a971d8;"></div>
<div class="t th" style="left:279.3px;top:142.3px;width:140.7px;height:14px;line-height:14px;overflow:hidden;font-size:9px;color:#101010;text-align:left;font-weight:bold;"><span>แบบฟอร์มกรอกข้อมูลการขนส่ง</span></div>
<div class="a" style="left:564px;top:217px;width:56px;height:20px;border-radius:3px;background:linear-gradient(#f08a3c,#e96a12);box-shadow:0 1px 2px rgba(0,0,0,.35);"></div>
<div class="t th" style="left:564.0px;top:220.0px;width:56.0px;height:14px;line-height:14px;overflow:hidden;font-size:8px;color:#ffffff;text-align:center;font-weight:bold;"><span>เพิ่มข้อมูล</span></div>
<div class="a" style="left:15px;top:240.5px;width:615px;height:33.5px;background:#4472c4;"></div>
<div class="a" style="left:66px;top:240px;width:564px;height:1px;background:#101010;"></div>
<div class="a" style="left:66px;top:273.5px;width:564px;height:1.0px;background:#101010;"></div>
<div class="a" style="left:65.5px;top:240px;width:1.0px;height:34.5px;background:#101010;"></div>
<div class="a" style="left:127.5px;top:240px;width:1.0px;height:34.5px;background:#101010;"></div>
<div class="a" style="left:222.0px;top:240px;width:1.0px;height:34.5px;background:#101010;"></div>
<div class="a" style="left:293.0px;top:240px;width:1.0px;height:34.5px;background:#101010;"></div>
<div class="a" style="left:546.0px;top:240px;width:1.0px;height:34.5px;background:#101010;"></div>
<div class="a" style="left:15px;top:273.5px;width:51px;height:1.0px;background:#101010;"></div>
<div class="a" style="left:15px;top:274.5px;width:615px;height:13.0px;background:#d9e1f2;"></div>
<div class="a" style="left:15px;top:287px;width:615px;height:1px;background:#b4c6e7;"></div>
<div class="a" style="left:65.5px;top:274.5px;width:1.0px;height:13.0px;background:#101010;"></div>
<div class="a" style="left:127.5px;top:274.5px;width:1.0px;height:13.0px;background:#101010;"></div>
<div class="a" style="left:128px;top:301px;width:502px;height:1px;background:#8ea9db;"></div>
<div class="a" style="left:629.3px;top:288px;width:1.0px;height:14px;background:#8ea9db;"></div>
<div class="a" style="left:627px;top:299px;width:3px;height:3px;background:#4472c4;clip-path:polygon(100% 0,100% 100%,0 100%);"></div>
<div class="a" style="left:63.5px;top:285px;width:2.5px;height:2.5px;background:#3a4f8a;clip-path:polygon(100% 0,100% 100%,0 100%);"></div>
<div class="a" style="left:65.5px;top:286.8px;width:63.0px;height:15.399999999999977px;border:1.300px solid #1e7145;"></div>
<div class="a" style="left:126px;top:300px;width:4px;height:4px;background:#ffffff;"></div>
<div class="a" style="left:126.5px;top:300.5px;width:3.0px;height:3.0px;background:#1e7145;"></div>
<div class="t th" style="left:15.0px;top:246.0px;width:51.0px;height:14px;line-height:14px;overflow:hidden;font-size:8.7px;color:#fff;text-align:center;font-weight:bold;"><span>คิวเข้ารับ</span></div>
<div class="t th" style="left:15.0px;top:256.0px;width:43.0px;height:14px;line-height:14px;overflow:hidden;font-size:8.7px;color:#fff;text-align:center;font-weight:bold;padding-left:8px;"><span>อาหาร</span></div>
<div class="t th" style="left:66.0px;top:251.0px;width:62.0px;height:14px;line-height:14px;overflow:hidden;font-size:8.7px;color:#fff;text-align:center;font-weight:bold;"><span>วันที่</span></div>
<div class="t th" style="left:128.0px;top:251.0px;width:94.0px;height:14px;line-height:14px;overflow:hidden;font-size:8.7px;color:#fff;text-align:center;font-weight:bold;"><span>ฟาร์ม</span></div>
<div class="t th" style="left:222.0px;top:251.0px;width:71.0px;height:14px;line-height:14px;overflow:hidden;font-size:8.7px;color:#fff;text-align:center;font-weight:bold;"><span>รถขนส่ง</span></div>
<div class="t th" style="left:480.0px;top:246.0px;width:66.0px;height:14px;line-height:14px;overflow:hidden;font-size:8.7px;color:#fff;text-align:center;font-weight:bold;padding-right:10px;"><span>ยืนยันความ</span></div>
<div class="t th" style="left:480.0px;top:256.0px;width:66.0px;height:14px;line-height:14px;overflow:hidden;font-size:8.7px;color:#fff;text-align:right;font-weight:bold;padding-right:9px;"><span>ต้องการอาหาร</span></div>
<div class="t th" style="left:546.0px;top:251.0px;width:84.0px;height:14px;line-height:14px;overflow:hidden;font-size:8.7px;color:#fff;text-align:center;font-weight:bold;"><span>สถานะรถ</span></div>
<div class="a" style="left:56.8px;top:264.5px;width:8.5px;height:8.800000000000011px;border:0.500px solid #9a9a9a;background:linear-gradient(#ffffff,#dcdcdc);"></div>
<div class="a" style="left:118.3px;top:264.5px;width:8.5px;height:8.800000000000011px;border:0.500px solid #9a9a9a;background:linear-gradient(#ffffff,#dcdcdc);"></div>
<div class="a" style="left:212.8px;top:264.5px;width:8.5px;height:8.800000000000011px;border:0.500px solid #9a9a9a;background:linear-gradient(#ffffff,#dcdcdc);"></div>
<div class="a" style="left:283.8px;top:264.5px;width:8.5px;height:8.800000000000011px;border:0.500px solid #9a9a9a;background:linear-gradient(#ffffff,#dcdcdc);"></div>
<div class="a" style="left:537.2px;top:264.5px;width:8.5px;height:8.800000000000011px;border:0.500px solid #9a9a9a;background:linear-gradient(#ffffff,#dcdcdc);"></div>
<div class="a" style="left:620.3px;top:264.5px;width:8.5px;height:8.800000000000011px;border:0.500px solid #9a9a9a;background:linear-gradient(#ffffff,#dcdcdc);"></div>
<svg class="a" style="left:0px;top:260px" width="800" height="20" viewBox="0 260 800 20" fill="none" stroke="#d0d0d0" stroke-width="1"><path d="M59.3 268.2h3.400l-1.700 2z" fill="#444" stroke="none"/><path d="M120.8 268.2h3.400l-1.700 2z" fill="#444" stroke="none"/><path d="M215.3 268.2h3.400l-1.700 2z" fill="#444" stroke="none"/><path d="M286.3 268.2h3.400l-1.700 2z" fill="#444" stroke="none"/><path d="M539.7 268.2h3.400l-1.700 2z" fill="#444" stroke="none"/><path d="M622.8 268.2h3.400l-1.700 2z" fill="#444" stroke="none"/></svg>
<div class="t" style="left:38.5px;top:276.2px;font-size:9.00px;color:#1a1a1a;transform-origin:0 50%;transform:scaleX(0.999);font-weight:bold;">1</div>
<div class="a" style="left:296px;top:91px;width:208px;height:246.5px;background:#c0c0ff;box-shadow:0 2px 9px rgba(0,0,0,.3),0 0 0 0.500px #9a9aaa;"></div>
<div class="a" style="left:296px;top:91px;width:208px;height:15px;background:#ffffff;"></div>
<div class="t" style="left:301.0px;top:95.0px;font-size:8.00px;color:#a8a8a8;transform-origin:0 50%;transform:scaleX(0.812);">UserForm1</div>
<svg class="a" style="left:480px;top:91px" width="24" height="15" viewBox="480 91 24 15" fill="none" stroke="#d0d0d0" stroke-width="1"><path d="M492 96.500l5.500 5.500 M497.500 96.500l-5.500 5.500" stroke="#8a8a8a" stroke-width="0.800"/></svg>
<div class="a" style="left:301px;top:214px;width:47px;height:16px;background:#ebebeb;"></div>
<div class="a" style="left:301px;top:235px;width:47px;height:14px;background:#ebebeb;"></div>
<div class="a" style="left:301px;top:258px;width:47px;height:13.5px;background:#ebebeb;"></div>
<div class="a" style="left:301px;top:282px;width:47px;height:14.5px;background:#ebebeb;"></div>
<div class="t th" style="left:301.0px;top:217.5px;width:47.0px;height:14px;line-height:14px;overflow:hidden;font-size:8px;color:#111;text-align:center;font-weight:bold;font-weight:600;"><span>รถขนส่ง</span></div>
<div class="t th" style="left:301.0px;top:236.3px;width:47.0px;height:14px;line-height:14px;overflow:hidden;font-size:7.8px;color:#111;text-align:center;font-weight:bold;font-weight:600;"><span>ทะเบียนรถ</span></div>
<div class="t th" style="left:301.0px;top:259.0px;width:47.0px;height:14px;line-height:14px;overflow:hidden;font-size:7.8px;color:#111;text-align:center;font-weight:bold;font-weight:600;"><span>สินค้า</span></div>
<div class="t th" style="left:301.0px;top:282.3px;width:47.0px;height:14px;line-height:14px;overflow:hidden;font-size:8.4px;color:#111;text-align:center;font-weight:bold;font-weight:600;"><span>จำนวน (ตัน)</span></div>
<div class="a" style="left:357px;top:206px;width:131px;height:19.5px;background:#fff;border:1px solid;border-color:#7a7a7a #f4f4f4 #f4f4f4 #7a7a7a;box-shadow:inset 1px 1px 0 #c8c8c8;"></div>
<div class="a" style="left:357px;top:230.5px;width:131px;height:19.5px;background:#fff;border:1px solid;border-color:#7a7a7a #f4f4f4 #f4f4f4 #7a7a7a;box-shadow:inset 1px 1px 0 #c8c8c8;"></div>
<div class="a" style="left:357px;top:254px;width:131px;height:19.5px;background:#fff;border:1px solid;border-color:#7a7a7a #f4f4f4 #f4f4f4 #7a7a7a;box-shadow:inset 1px 1px 0 #c8c8c8;"></div>
<div class="a" style="left:357px;top:282px;width:131px;height:19.5px;background:#fff;border:1px solid;border-color:#7a7a7a #f4f4f4 #f4f4f4 #7a7a7a;box-shadow:inset 1px 1px 0 #c8c8c8;"></div>
<div class="a" style="left:477px;top:255.5px;width:10.199999999999989px;height:16.80000000000001px;background:#f0f0f0;border:1px solid;border-color:#fff #6a6a6a #6a6a6a #fff;"></div>
<div class="a" style="left:477px;top:207.5px;width:10.199999999999989px;height:16.80000000000001px;background:#f0f0f0;border:1px solid;border-color:#fff #6a6a6a #6a6a6a #fff;"></div>
<svg class="a" style="left:470px;top:255px" width="20" height="20" viewBox="470 255 20 20" fill="none" stroke="#d0d0d0" stroke-width="1"><path d="M480.100 262.500h4l-2 2.500z" fill="#111" stroke="none"/></svg>
<div class="t" style="left:364.0px;top:258.5px;font-size:7.00px;color:#333;transform-origin:0 50%;transform:scaleX(1.009);">001A</div>
<div class="t" style="left:364.0px;top:286.5px;font-size:7.00px;color:#333;transform-origin:0 50%;transform:scaleX(1.027);">20</div>
<div class="a" style="left:301px;top:315px;width:55.5px;height:17px;background:#f0f0f0;border:1px solid;border-color:#ffffff #8a8a8a #8a8a8a #ffffff;box-shadow:0.700px 0.700px 0 #555;"></div>
<div class="a" style="left:376px;top:315px;width:55.5px;height:17px;background:#f0f0f0;border:1px solid;border-color:#ffffff #8a8a8a #8a8a8a #ffffff;box-shadow:0.700px 0.700px 0 #555;"></div>
<div class="a" style="left:441px;top:315px;width:56px;height:17px;background:#f0f0f0;border:1px solid;border-color:#ffffff #8a8a8a #8a8a8a #ffffff;box-shadow:0.700px 0.700px 0 #555;outline:0.800px solid #333;"></div>
<div class="t" style="left:318.5px;top:319.0px;font-size:6.80px;color:#111;transform-origin:0 50%;transform:scaleX(0.874);">Cancel</div>
<div class="t" style="left:396.0px;top:319.0px;font-size:6.80px;color:#111;transform-origin:0 50%;transform:scaleX(0.923);">Clear</div>
<div class="t" style="left:464.0px;top:319.0px;font-size:6.80px;color:#111;transform-origin:0 50%;transform:scaleX(0.868);">Add</div>
<div class="a" style="left:292.5px;top:102.5px;width:214.0px;height:120.5px;background:#f0f0f0;box-shadow:0 3px 10px rgba(0,0,0,.38),0 0 0 0.600px #7a7a7a;"></div>
<div class="a" style="left:292.5px;top:102.5px;width:214.0px;height:17.0px;background:#ffffff;"></div>
<div class="t" style="left:298.0px;top:106.6px;font-size:8.20px;color:#000;transform-origin:0 50%;transform:scaleX(0.835);">Microsoft Visual Basic</div>
<div class="t" style="left:299.6px;top:128.6px;font-size:7.30px;color:#000;transform-origin:0 50%;transform:scaleX(0.875);">Run-time error &#x27;-2147417848 (80010108)&#x27;:</div>
<div class="t" style="left:299.6px;top:143.9px;font-size:7.30px;color:#000;transform-origin:0 50%;transform:scaleX(0.864);">Method &#x27;Add&#x27; of object &#x27;ListRows&#x27; failed</div>
<div class="a" style="left:300px;top:204.5px;width:43px;height:12.0px;background:#cccccc;border:1px solid #bfbfbf;"></div>
<div class="a" style="left:351.5px;top:204.5px;width:42.0px;height:12.0px;background:#e1e1e1;border:1px solid #adadad;"></div>
<div class="a" style="left:403.5px;top:204.5px;width:42.5px;height:12.0px;background:#e1e1e1;border:1.300px solid #0078d7;"></div>
<div class="a" style="left:455px;top:204.5px;width:42.5px;height:12.0px;background:#e1e1e1;border:1px solid #adadad;"></div>
<div class="t" style="left:308.5px;top:205.5px;font-size:7.00px;color:#9a9a9a;transform-origin:0 50%;transform:scaleX(0.910);">Continue</div>
<div class="t" style="left:367.0px;top:205.5px;font-size:7.00px;color:#111;transform-origin:0 50%;transform:scaleX(0.843);">End</div>
<div class="t" style="left:415.5px;top:205.5px;font-size:7.00px;color:#111;transform-origin:0 50%;transform:scaleX(0.921);">Debug</div>
<div class="t" style="left:469.5px;top:205.5px;font-size:7.00px;color:#111;transform-origin:0 50%;transform:scaleX(0.938);">Help</div>
<div class="a" style="left:0px;top:403.5px;width:800px;height:15.0px;background:#1f1f1f;"></div>
<div class="a" style="left:59px;top:403.5px;width:30.5px;height:14.0px;background:linear-gradient(#ffffff 0%,#e8d4f6 45%,#d4b4ee 100%);border-bottom:1.500px solid #1e7145;"></div>
<div class="t" style="left:65.7px;top:406.0px;font-size:8.30px;color:#1e7145;transform-origin:0 50%;transform:scaleX(0.906);font-weight:bold;">Data</div>
<div class="a" style="left:0px;top:418.5px;width:800px;height:14.0px;background:#2b2b2b;"></div>
<div class="a" style="left:628px;top:419px;width:23px;height:13.5px;background:#5a5a5a;"></div>
<div class="t" style="left:4.2px;top:421.7px;font-size:7.60px;color:#e0e0e0;transform-origin:0 50%;transform:scaleX(0.810);">Ready</div>
<div class="t" style="left:63.0px;top:421.7px;font-size:7.60px;color:#e0e0e0;transform-origin:0 50%;transform:scaleX(0.886);">Accessibility: Good to go</div>
<div class="t" style="left:783.0px;top:420.7px;font-size:7.00px;color:#e0e0e0;transform-origin:0 50%;transform:scaleX(0.857);">90%</div>
<div class="a" style="left:0px;top:432.5px;width:800px;height:17.5px;background:#1c1c1e;"></div>
<div class="a" style="left:133.5px;top:448.5px;width:16.0px;height:1.5px;background:#c9a8e8;"></div>
<div class="a" style="left:155px;top:448.5px;width:16px;height:1.5px;background:#c9a8e8;"></div>
<svg class="a" style="left:0px;top:403px" width="800" height="47" viewBox="0 403 800 47" fill="none" stroke="#d0d0d0" stroke-width="1"><path d="M19 409l-2.500 2 2.500 2z" fill="#8a8a8a" stroke="none"/><path d="M33 409l2.500 2-2.500 2z" fill="#8a8a8a" stroke="none"/><circle cx="113.500" cy="411" r="4" stroke="#e8e8e8" stroke-width="0.900"/><path d="M111.500 411h4 M113.500 409v4" stroke="#e8e8e8" stroke-width="0.900"/><circle cx="480" cy="407" r="0.650" fill="#d0d0d0" stroke="none"/><circle cx="480" cy="410" r="0.650" fill="#d0d0d0" stroke="none"/><circle cx="480" cy="413" r="0.650" fill="#d0d0d0" stroke="none"/><rect x="489" y="407.500" width="9.500" height="8" fill="#5a5a5a" stroke="none"/><path d="M495 409.500v4l-2.500-2z" fill="#fff" stroke="none"/><rect x="499" y="407.500" width="266.500" height="8" fill="#4d4d4d" stroke="#767676" stroke-width="0.700"/><rect x="779" y="407.500" width="8.500" height="8" fill="#5a5a5a" stroke="none"/><path d="M782 409.500v4l2.500-2z" fill="#fff" stroke="none"/><path d="M34.500 422.500h7v7h-7z M34.500 424.500h7" stroke="#d0d0d0" stroke-width="0.800"/><circle cx="39.500" cy="427.500" r="1.300" stroke="#d0d0d0" stroke-width="0.700"/><path d="M36 426.500h1.500 M36 428h1.500" stroke="#d0d0d0" stroke-width="0.600"/><circle cx="57" cy="422.800" r="0.900" stroke="#e0e0e0" stroke-width="0.700"/><path d="M53.500 424.500h6.500 M57 424.500v2.500l-1.500 3 M57 427l1.500 2.500" stroke="#e0e0e0" stroke-width="0.800"/><path d="M58.500 428l1 1 2-2.500" stroke="#e0e0e0" stroke-width="0.800"/><path d="M635.500 422h7.500v7.500h-7.500z M635.500 424.500h7.500 M635.500 427h7.500 M638 422v7.500 M640.500 422v7.500" stroke="#f0f0f0" stroke-width="0.700"/><path d="M659.500 422h7.500v7.500h-7.500z" stroke="#d8d8d8" stroke-width="0.800"/><rect x="661.500" y="423.500" width="3.500" height="4.500" fill="#d8d8d8" stroke="none"/><path d="M683 422h7.500v7.500h-7.500z M683 426h4v-4" stroke="#d8d8d8" stroke-width="0.800"/><path d="M702 425.700h4 M709 425.700h58.500 M770.500 425.700h4 M772.500 423.700v4" stroke="#d0d0d0" stroke-width="0.800"/><rect x="734" y="422.500" width="2.600" height="7" fill="#e8e8e8" stroke="none"/><path d="M6 437.500l4-0.600v4h-4z M10.600 436.800l4.400-0.700v4.800h-4.400z M6 441.500h4v4l-4-0.600z M10.600 441.500h4.400v4.800l-4.400-0.700z" fill="#ffffff" stroke="none"/><circle cx="33" cy="439.500" r="3" stroke="#ffffff" stroke-width="1"/><path d="M31 442l-3.500 3.500" stroke="#fff" stroke-width="1.100"/><path d="M53 436.500c3-1 4 2 1.500 3.500 M54 436.500v9" stroke="#e8452c" stroke-width="1.300"/><path d="M50.500 441l6 4.500 M56.500 441l-6 4.500" stroke="#3a8ee6" stroke-width="1.200"/><circle cx="76" cy="441" r="4.800" fill="#1b84d6" stroke="none"/><path d="M72 443c0-4 6-5 8-1.500" stroke="#4fd08a" stroke-width="1.500"/><circle cx="74.500" cy="443.500" r="1.800" fill="#b8c0c8" stroke="none"/><rect x="93" y="437.500" width="9.500" height="8.500" rx="1.200" fill="#f4f4f4" stroke="none"/><path d="M95.500 437.500v-1.300h4.500v1.300" stroke="#f4f4f4" stroke-width="0.800"/><rect x="95.300" y="439.500" width="2" height="2" fill="#f25022" stroke="none"/><rect x="98" y="439.500" width="2" height="2" fill="#7fba00" stroke="none"/><rect x="95.300" y="442.200" width="2" height="2" fill="#00a4ef" stroke="none"/><rect x="98" y="442.200" width="2" height="2" fill="#ffb900" stroke="none"/><path d="M114.500 437h4l1 1.200h5v7.300h-10z" fill="#f7c648" stroke="none"/><rect x="114.500" y="440" width="10" height="5.500" fill="#f9d673" stroke="none"/><rect x="117" y="442.500" width="5" height="3" fill="#3a8ee6" stroke="none"/><circle cx="141.300" cy="441" r="4.400" fill="#e33b2e" stroke="none"/><path d="M141.300 441l-3.900 2.100a4.400 4.400 0 0 0 3.900 2.300z" fill="#2da94f" stroke="none"/><path d="M141.300 441v4.400a4.400 4.400 0 0 0 3.900-6.500z" fill="#fdd23b" stroke="none"/><path d="M137.400 443.100a4.400 4.400 0 0 0 3.900 2.300l2-3.400z" fill="#2da94f" stroke="none"/><circle cx="141.300" cy="441" r="1.900" fill="#4a8af4" stroke="#fff" stroke-width="0.600"/><rect x="160" y="436.500" width="8" height="9" rx="0.800" fill="#21a366" stroke="none"/><rect x="164" y="436.500" width="4" height="4.500" fill="#33c481" stroke="none"/><rect x="157.500" y="438.500" width="6" height="6" rx="0.600" fill="#107c41" stroke="none"/><circle cx="592.500" cy="441.500" r="6" fill="#f5c12e" stroke="none"/><circle cx="590" cy="439.500" r="5" fill="#1c1c1e" stroke="none"/><path d="M587 440.500a2 2 0 0 1 1-3.500a2.500 2.500 0 0 1 4.500 0a1.800 1.800 0 0 1 0.500 3.500z" fill="#dfe6ee" stroke="none"/><path d="M673 443l3-3 3 3" stroke="#e8e8e8" stroke-width="0.900"/><path d="M687.500 445a6.500 6.500 0 0 1 6.500-6.500 M689.500 445a4.500 4.500 0 0 1 4.500-4.500 M691.500 445a2.500 2.500 0 0 1 2.500-2.500" stroke="#d8d8d8" stroke-width="0.800"/><circle cx="693.500" cy="444.500" r="0.700" fill="#e8e8e8" stroke="none"/><path d="M699 439.500h1.500l2-2v7l-2-2h-1.500z" stroke="#e8e8e8" stroke-width="0.800"/><path d="M704.500 439.500l3 3 M707.500 439.500l-3 3" stroke="#e8e8e8" stroke-width="0.800"/><rect x="715.500" y="438" width="5.500" height="7" rx="1" stroke="#e8e8e8" stroke-width="0.800"/><path d="M716.500 436.500h3.500 M717 446.500h2.500" stroke="#e8e8e8" stroke-width="0.800"/><circle cx="719.500" cy="441.500" r="1.300" stroke="#e8e8e8" stroke-width="0.700"/><path d="M776 436.500h9v7h-4l-2 2.500v-2.500h-3z" fill="#ffffff" stroke="none"/><path d="M778 439h5 M778 441h5" stroke="#1c1c1e" stroke-width="0.700"/></svg>
<div class="t" style="left:158.3px;top:436.7px;font-size:5.50px;color:#ffffff;transform-origin:0 50%;transform:scaleX(1.199);font-weight:bold;">X</div>
<div class="t" style="left:603.7px;top:436.5px;font-size:8.00px;color:#f0f0f0;transform-origin:0 50%;transform:scaleX(0.940);">28°C</div>
<div class="t th" style="left:626.0px;top:434.0px;width:42.0px;height:14px;line-height:14px;overflow:hidden;font-size:6.2px;color:#f0f0f0;text-align:left;"><span>แดดโดยส่วนใ...</span></div>
<div class="t" style="left:728.7px;top:436.5px;font-size:7.60px;color:#f0f0f0;transform-origin:0 50%;transform:scaleX(0.808);">ENG</div>
<div class="t" style="left:749.5px;top:436.5px;font-size:7.60px;color:#f0f0f0;transform-origin:0 50%;transform:scaleX(0.841);">11:22</div>
</div>
<script>
(function(){var l=document.querySelectorAll('.th');for(var i=0;i<l.length;i++){var d=l[i],s=d.firstChild,c=getComputedStyle(d);
var a=d.clientWidth-parseFloat(c.paddingLeft)-parseFloat(c.paddingRight),w=s.getBoundingClientRect().width;
if(w>a+0.5){s.style.display='inline-block';s.style.transformOrigin='0 50%';s.style.transform='scaleX('+(a/w)+')';d.style.textAlign='left';}}})();
</script>
</body>
</html>
